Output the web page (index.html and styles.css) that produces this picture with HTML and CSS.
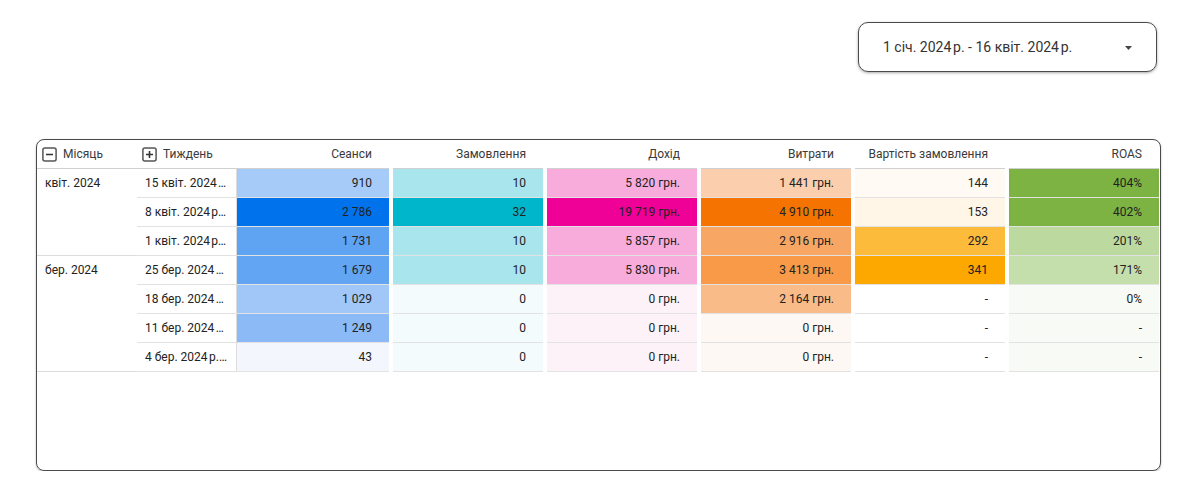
FILE: index.html
```html
<!DOCTYPE html>
<html lang="uk">
<head>
<meta charset="utf-8">
<title>Звіт</title>
<link rel="stylesheet" href="styles.css">
</head>
<body>
<div class="top">
  <div class="picker">
    <span class="picker-text">1 січ. 2024&#8239;р. - 16 квіт. 2024&#8239;р.</span>
    <svg class="caret" width="7" height="4" viewBox="0 0 7 4"><path d="M0 0h7L3.5 4z" fill="#444"/></svg>
  </div>
</div>

<div class="card">
  <div class="grid">
    <div class="h hl"><svg class="tog" width="15" height="15" viewBox="0 0 15 15"><rect x="0.9" y="0.9" width="13.2" height="13.2" rx="2" fill="none" stroke="#555" stroke-width="1.5"/><path d="M4 7.5h7" stroke="#333" stroke-width="1.6"/></svg><span>Місяць</span></div>
    <div class="h hl"><svg class="tog" width="15" height="15" viewBox="0 0 15 15"><rect x="0.9" y="0.9" width="13.2" height="13.2" rx="2" fill="none" stroke="#555" stroke-width="1.5"/><path d="M4 7.5h7M7.5 4v7" stroke="#333" stroke-width="1.6"/></svg><span>Тиждень</span></div>
    <div class="h hr first">Сеанси</div>
    <div class="h hr">Замовлення</div>
    <div class="h hr">Дохід</div>
    <div class="h hr">Витрати</div>
    <div class="h hr">Вартість замовлення</div>
    <div class="h hr">ROAS</div>

    <div class="month m3">квіт. 2024</div>
    <div class="wk">15 квіт. 2024&#8239;р. - 21 квіт. 2024&#8239;р.</div>
    <div class="v first" style="background:#a7cbf8">910</div>
    <div class="v" style="background:#a8e5ec">10</div>
    <div class="v" style="background:#f8acdb">5 820 грн.</div>
    <div class="v" style="background:#fbcfad">1 441 грн.</div>
    <div class="v" style="background:#fffaf3">144</div>
    <div class="v" style="background:#7cb342">404%</div>

    <div class="wk">8 квіт. 2024&#8239;р. - 14 квіт. 2024&#8239;р.</div>
    <div class="v first" style="background:#0073ec">2 786</div>
    <div class="v" style="background:#00b6cb">32</div>
    <div class="v" style="background:#ef0096">19 719 грн.</div>
    <div class="v" style="background:#f57300">4 910 грн.</div>
    <div class="v" style="background:#fff6e8">153</div>
    <div class="v" style="background:#7db343">402%</div>

    <div class="wk">1 квіт. 2024&#8239;р. - 7 квіт. 2024&#8239;р.</div>
    <div class="v first" style="background:#5fa3f3">1 731</div>
    <div class="v" style="background:#a8e5ec">10</div>
    <div class="v" style="background:#f8acdb">5 857 грн.</div>
    <div class="v" style="background:#f8a663">2 916 грн.</div>
    <div class="v" style="background:#fdbb3c">292</div>
    <div class="v" style="background:#bcdaa0">201%</div>

    <div class="month m4">бер. 2024</div>
    <div class="wk">25 бер. 2024&#8239;р. - 31 бер. 2024&#8239;р.</div>
    <div class="v first" style="background:#62a5f3">1 679</div>
    <div class="v" style="background:#a8e5ec">10</div>
    <div class="v" style="background:#f8acdb">5 830 грн.</div>
    <div class="v" style="background:#f89a48">3 413 грн.</div>
    <div class="v" style="background:#fda800">341</div>
    <div class="v" style="background:#c5dfac">171%</div>

    <div class="wk">18 бер. 2024&#8239;р. - 24 бер. 2024&#8239;р.</div>
    <div class="v first" style="background:#a1c7f8">1 029</div>
    <div class="v" style="background:#f3fbfd">0</div>
    <div class="v" style="background:#fdf2f8">0 грн.</div>
    <div class="v" style="background:#f9bb88">2 164 грн.</div>
    <div class="v" style="background:#ffffff">-</div>
    <div class="v" style="background:#f8faf6">0%</div>

    <div class="wk">11 бер. 2024&#8239;р. - 17 бер. 2024&#8239;р.</div>
    <div class="v first" style="background:#8bbaf6">1 249</div>
    <div class="v" style="background:#f3fbfd">0</div>
    <div class="v" style="background:#fdf2f8">0 грн.</div>
    <div class="v" style="background:#fdf8f4">0 грн.</div>
    <div class="v" style="background:#ffffff">-</div>
    <div class="v" style="background:#f8faf6">-</div>

    <div class="wk">4 бер. 2024&#8239;р. - 10 бер. 2024&#8239;р.</div>
    <div class="v first" style="background:#f3f7fd">43</div>
    <div class="v" style="background:#f3fbfd">0</div>
    <div class="v" style="background:#fdf2f8">0 грн.</div>
    <div class="v" style="background:#fdf8f4">0 грн.</div>
    <div class="v" style="background:#ffffff">-</div>
    <div class="v" style="background:#f8faf6">-</div>
  </div>
</div>
</body>
</html>
```

FILE: styles.css
```css
* { box-sizing: border-box; }
html, body {
  margin: 0;
  padding: 0;
  background: #ffffff;
  font-family: Roboto, "Noto Sans", Arial, sans-serif;
  color: #222222;
}

.top {
  display: flex;
  justify-content: flex-end;
  padding: 22px 40px 0 0;
}

.picker {
  width: 299px;
  height: 50px;
  border: 1px solid #4a4a4a;
  border-radius: 10px;
  box-shadow: 0 1px 3px rgba(0,0,0,0.35);
  display: flex;
  align-items: center;
  justify-content: space-between;
  padding: 0 24px 0 24px;
  font-size: 14px;
  color: #333333;
}

.caret { display: block; margin-top: 1px; }

.card {
  margin: 67px 36px 0 36px;
  width: 1125px;
  height: 332px;
  border: 1px solid #4a4a4a;
  border-radius: 8px;
  box-shadow: 0 1px 2px rgba(0,0,0,0.3);
  overflow: hidden;
  font-size: 12px;
}

.grid {
  display: grid;
  grid-template-columns: 100px 100px 152px 154px 154px 154px 154px 154px;
  grid-auto-rows: 29px;
}

.h {
  display: flex;
  align-items: center;
  border-bottom: 1px solid #d0d0d0;
  color: #3a3a3a;
  margin-left: 4px;
}
.h.hl { margin-left: 0; padding-left: 5px; }
.h.hl span { margin-left: 6px; }
.tog { display: block; flex: none; }
.h.hr { justify-content: flex-end; padding-right: 17px; }
.h.first { margin-left: 0; }

.month {
  grid-column: 1;
  border-bottom: 1px solid #dcdcdc;
  padding-left: 8px;
  line-height: 28px;
  color: #222222;
}
.month.m3 { grid-row: span 3; }
.month.m4 { grid-row: span 4; }

.wk {
  grid-column: 2;
  border-bottom: 1px solid #e2e2e2;
  border-right: 1px solid #dcdcdc;
  padding: 0 8px 0 8px;
  line-height: 28px;
  white-space: nowrap;
  overflow: hidden;
  text-overflow: ellipsis;
  color: #222222;
}

.v {
  margin-left: 4px;
  border-bottom: 1px solid #e2e2e2;
  display: flex;
  align-items: center;
  justify-content: flex-end;
  padding-right: 17px;
  color: #222222;
}
.v.first { margin-left: 0; }
```
